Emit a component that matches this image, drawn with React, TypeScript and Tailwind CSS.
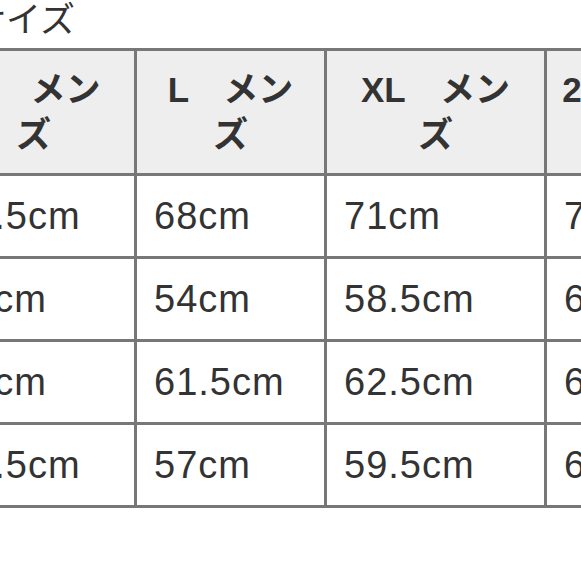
import React from 'react';

const rows = [
  ['65.5cm', '68cm', '71cm', '74cm'],
  ['50cm', '54cm', '58.5cm', '63cm'],
  ['59cm', '61.5cm', '62.5cm', '64cm'],
  ['55.5cm', '57cm', '59.5cm', '62cm'],
];

const heads = ['M　メンズ', 'L　メンズ', 'XL　メンズ', '2XL　メンズ'];
const cols = [
  'w-[204px] px-[18px]',
  'w-[190px] px-[18px]',
  'w-[220px] px-[18px]',
  'w-[202px] px-[10px]',
];

const App: React.FC = () => {
  return (
    <div
      className="w-[581px] h-[581px] overflow-hidden bg-white text-[#333]"
      style={{ fontFamily: '"Liberation Sans", "Noto Sans CJK JP", sans-serif' }}
    >
      <p className="ml-[-29px] text-[35px] leading-[40px] font-normal">サイズ</p>

      <table className="ml-[-70px] mt-[8px] table-fixed border-collapse w-[816px]">
        <thead>
          <tr className="h-[125px]">
            {heads.map((h, i) => (
              <th
                key={h}
                className={`${cols[i]} border-[3px] border-[#777] bg-[#eeeeee] text-center text-[35px] leading-[45px] font-bold`}
              >
                {h}
              </th>
            ))}
          </tr>
        </thead>
        <tbody>
          {rows.map((r, ri) => (
            <tr key={ri} className="h-[83px]">
              {r.map((c, ci) => (
                <td
                  key={ci}
                  className="border-[3px] border-[#777] pl-[17px] text-left text-[38px] tracking-[1px] font-normal"
                >
                  {c}
                </td>
              ))}
            </tr>
          ))}
        </tbody>
      </table>
    </div>
  );
};

export default App;
